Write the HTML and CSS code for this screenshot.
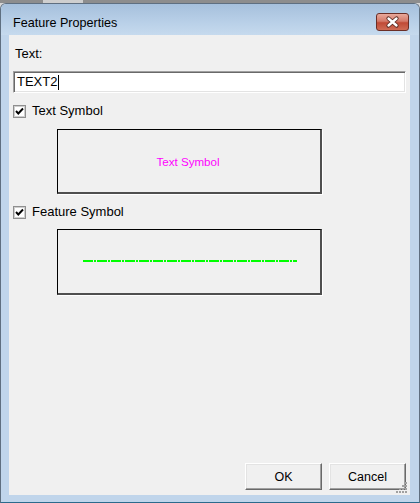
FILE: index.html
```html
<!DOCTYPE html>
<html>
<head>
<meta charset="utf-8">
<link rel="stylesheet" href="styles.css">
</head>
<body>
<div class="strip"><span class="strip-light"></span></div>
<div class="window">
  <div class="titlebar">
    <span class="title">Feature Properties</span>
    <span class="close">
      <svg width="33" height="18" viewBox="0 0 33 18">
        <path d="M12.5 5.5 L20.5 12.5 M20.5 5.5 L12.5 12.5" stroke="#5a2a22" stroke-width="4.2" stroke-linecap="round" fill="none"/>
        <path d="M12.5 5.5 L20.5 12.5 M20.5 5.5 L12.5 12.5" stroke="#ffffff" stroke-width="2.4" stroke-linecap="round" fill="none"/>
      </svg>
    </span>
  </div>
  <div class="frame-row">
    <div class="frame-side left"></div>
    <div class="client">
      <div class="label">Text:</div>
      <div class="input"><span class="value">TEXT2</span><span class="caret"></span></div>
      <div class="check-row">
        <svg class="checkbox" width="13" height="13" viewBox="0 0 13 13">
          <rect x="0.5" y="0.5" width="12" height="12" fill="#fff" stroke="#8f8f8f"/>
          <rect x="1.5" y="1.5" width="10" height="10" fill="#fff" stroke="#cfcfcf"/>
          <polyline points="3,6 5.3,8.5 10,3.5" fill="none" stroke="#000" stroke-width="1.9"/>
        </svg>
        <span>Text Symbol</span>
      </div>
      <div class="preview text-preview">
        <span class="sym-text">Text Symbol</span>
      </div>
      <div class="check-row">
        <svg class="checkbox" width="13" height="13" viewBox="0 0 13 13">
          <rect x="0.5" y="0.5" width="12" height="12" fill="#fff" stroke="#8f8f8f"/>
          <rect x="1.5" y="1.5" width="10" height="10" fill="#fff" stroke="#cfcfcf"/>
          <polyline points="3,6 5.3,8.5 10,3.5" fill="none" stroke="#000" stroke-width="1.9"/>
        </svg>
        <span>Feature Symbol</span>
      </div>
      <div class="preview feature-preview">
        <svg class="dash-line" width="214" height="2" viewBox="0 0 214 2" shape-rendering="crispEdges">
          <line x1="0" y1="1" x2="214" y2="1" stroke="#00ff00" stroke-width="2" stroke-dasharray="10 1 2 1"/>
        </svg>
      </div>
      <div class="spacer"></div>
      <div class="buttons">
        <button class="btn">OK</button>
        <button class="btn">Cancel</button>
      </div>
      <svg class="grip" width="12" height="12" viewBox="0 0 12 12">
        <g fill="#a0a0a0">
          <rect x="9" y="1" width="2" height="2"/>
          <rect x="6" y="4" width="2" height="2"/><rect x="9" y="4" width="2" height="2"/>
          <rect x="3" y="7" width="2" height="2"/><rect x="6" y="7" width="2" height="2"/><rect x="9" y="7" width="2" height="2"/>
          <rect x="0" y="10" width="2" height="2"/><rect x="3" y="10" width="2" height="2"/><rect x="6" y="10" width="2" height="2"/><rect x="9" y="10" width="2" height="2"/>
        </g>
      </svg>
    </div>
    <div class="frame-side right"></div>
  </div>
  <div class="frame-bottom"></div>
</div>
</body>
</html>
```

FILE: styles.css
```css
html, body {
  margin: 0;
  padding: 0;
}
body {
  width: 420px;
  height: 503px;
  overflow: hidden;
  background: #d6d6d6;
  font-family: "Liberation Sans", Arial, sans-serif;
  color: #000;
}
.strip {
  height: 3px;
  background: #8d8d8d;
  display: flex;
}
.strip-light {
  margin-left: 43px;
  width: 40px;
  height: 3px;
  background: #cfcfcf;
}
.window {
  height: 498px;
  border: 1px solid #5f6f80;
  border-bottom-color: #2b6a8c;
  border-radius: 6px 6px 0 0;
  background: #c0d5eb;
  display: flex;
  flex-direction: column;
  box-shadow: inset 1px 1px 0 #e4eef8;
}
.titlebar {
  height: 31px;
  display: flex;
  align-items: flex-start;
  justify-content: space-between;
  background: linear-gradient(#a6c0dc, #b9d0e8 60%, #c6daee);
  border-radius: 5px 5px 0 0;
}
.title {
  font-size: 12.6px;
  line-height: 15px;
  padding-top: 12px;
  padding-left: 12px;
  color: #000;
}
.close {
  margin-top: 9px;
  margin-right: 10px;
  width: 33px;
  height: 18px;
  box-sizing: border-box;
  border: 1px solid #6b2e26;
  border-radius: 3px;
  background: linear-gradient(#e9a99b, #d47a6a 45%, #c04a36 55%, #cf6c55);
  display: flex;
  align-items: center;
  justify-content: center;
  overflow: hidden;
}
.close svg {
  display: block;
  margin: -1px;
}
.frame-row {
  display: flex;
  height: 460px;
}
.frame-side {
  background: #c0d5eb;
}
.frame-side.left {
  width: 8px;
}
.frame-side.right {
  width: 9px;
}
.frame-bottom {
  height: 7px;
  background: #c0d5eb;
}
.client {
  position: relative;
  width: 401px;
  background: #f0f0f0;
  box-sizing: border-box;
  padding: 0 4px 5px 4px;
  display: flex;
  flex-direction: column;
  font-size: 13px;
}
.label {
  margin-top: 11px;
  line-height: 16px;
  padding-left: 2px;
}
.input {
  margin-top: 9px;
  height: 22px;
  box-sizing: border-box;
  background: #fff;
  border: 1px solid;
  border-color: #a0a0a0 #fff #fff #a0a0a0;
  box-shadow: inset 1px 1px 0 #696969, inset -1px -1px 0 #e3e3e3;
  display: flex;
  align-items: center;
  padding-left: 3px;
  line-height: 16px;
}
.caret {
  display: inline-block;
  width: 1px;
  height: 15px;
  background: #000;
  margin-left: 1px;
}
.check-row {
  margin-top: 10px;
  height: 16px;
  display: flex;
  align-items: center;
  line-height: 16px;
}
.checkbox {
  display: block;
  margin-right: 6px;
}
.preview {
  margin-left: 44px;
  width: 265px;
  box-sizing: border-box;
  border-top: 1px solid #000;
  border-left: 1px solid #000;
  border-right: 2px solid #4f4f4f;
  border-bottom: 2px solid #4f4f4f;
  box-shadow: 1px 1px 0 #ffffff;
  display: flex;
  align-items: center;
  justify-content: center;
}
.text-preview {
  margin-top: 10px;
  height: 65px;
}
.sym-text {
  color: #ff00ff;
  font-size: 11.6px;
  line-height: 14px;
  margin-top: 1px;
  margin-left: -2px;
}
.feature-preview {
  margin-top: 9px;
  height: 66px;
  justify-content: flex-start;
  padding-left: 25px;
}
.dash-line {
  display: block;
  margin-top: -1px;
}
.spacer {
  flex: 1;
}
.buttons {
  display: flex;
  justify-content: flex-end;
  gap: 7px;
}
.btn {
  width: 77px;
  height: 27px;
  box-sizing: border-box;
  background: #f0f0f0;
  border: 1px solid;
  border-color: #fff #696969 #696969 #fff;
  box-shadow: inset -1px -1px 0 #a0a0a0, inset 1px 1px 0 #e3e3e3;
  font-family: "Liberation Sans", Arial, sans-serif;
  font-size: 12.5px;
  color: #000;
  padding: 0;
}
.grip {
  position: absolute;
  right: 2px;
  bottom: 2px;
}
```
